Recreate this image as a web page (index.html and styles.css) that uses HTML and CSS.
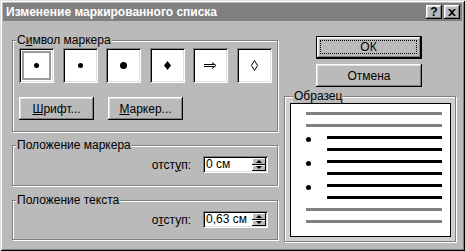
FILE: index.html
```html
<!DOCTYPE html>
<html lang="ru">
  <head>
    <meta charset="UTF-8" />
    <title>Изменение маркированного списка</title>
    <link rel="stylesheet" href="styles.css">
  </head>
  <body>
    <div class="dialog">
      <div class="titlebar">
        <span class="title">Изменение маркированного списка</span>
        <div class="caption-btns">
          <span class="cap-btn">?</span>
          <span class="cap-btn">
            <svg width="8" height="7" viewBox="0 0 8 7">
              <path d="M0 0h2l2 2 2-2h2L5 3.5 8 7H6L4 5 2 7H0l3-3.5z" fill="#000" />
            </svg>
          </span>
        </div>
      </div>

      <div class="main">
        <div class="left">
          <fieldset class="group group-symbol">
            <legend>С<u>и</u>мвол маркера</legend>
            <div class="group-inner">
              <div class="markers">
                <div class="marker selected"><div class="cell"><span class="dot dot-sm"></span></div></div>
                <div class="marker"><div class="cell"><span class="dot dot-sm"></span></div></div>
                <div class="marker"><div class="cell"><span class="dot dot-lg"></span></div></div>
                <div class="marker">
                  <div class="cell">
                    <svg width="7" height="9" viewBox="0 0 7 9"><polygon points="3.5,0 7,4.5 3.5,9 0,4.5" fill="#000" /></svg>
                  </div>
                </div>
                <div class="marker">
                  <div class="cell">
                    <svg width="13" height="7" viewBox="0 0 13 7">
                      <path d="M0 2.5h10M0 4.5h10M8 0.5l4 3-4 3" fill="none" stroke="#000" stroke-width="1" />
                    </svg>
                  </div>
                </div>
                <div class="marker">
                  <div class="cell">
                    <svg width="7" height="11" viewBox="0 0 7 11">
                      <polygon points="3.5,0.5 6.5,5.5 3.5,10.5 0.5,5.5" fill="none" stroke="#000" stroke-width="1" />
                    </svg>
                  </div>
                </div>
              </div>
              <div class="group-buttons">
                <button class="btn btn-small"><u>Ш</u>рифт...</button>
                <button class="btn btn-small"><u>М</u>аркер...</button>
              </div>
            </div>
          </fieldset>

          <fieldset class="group group-pos">
            <legend>Положение маркера</legend>
            <div class="field-row">
              <label>отст<u>у</u>п:</label>
              <div class="spin">
                <span class="spin-value">0 см</span>
                <div class="spin-btns">
                  <span class="spin-btn"><span class="arrow-up"></span></span>
                  <span class="spin-btn"><span class="arrow-down"></span></span>
                </div>
              </div>
            </div>
          </fieldset>

          <fieldset class="group group-text">
            <legend>Положение текста</legend>
            <div class="field-row">
              <label>о<u>т</u>ступ:</label>
              <div class="spin">
                <span class="spin-value">0,63 см</span>
                <div class="spin-btns">
                  <span class="spin-btn"><span class="arrow-up"></span></span>
                  <span class="spin-btn"><span class="arrow-down"></span></span>
                </div>
              </div>
            </div>
          </fieldset>
        </div>

        <div class="right">
          <button class="btn btn-wide btn-default"><span class="focus">ОК</span></button>
          <button class="btn btn-wide btn-cancel">Отмена</button>

          <fieldset class="group group-sample">
            <legend>Образец</legend>
            <div class="sample">
              <div class="line line-gray"></div>
              <div class="line line-gray"></div>
              <div class="bullet-row"><span class="bullet"></span><div class="line line-black"></div></div>
              <div class="line line-black line-indent"></div>
              <div class="bullet-row"><span class="bullet"></span><div class="line line-black"></div></div>
              <div class="line line-black line-indent"></div>
              <div class="bullet-row"><span class="bullet"></span><div class="line line-black"></div></div>
              <div class="line line-black line-indent"></div>
              <div class="line line-gray"></div>
              <div class="line line-gray"></div>
            </div>
          </fieldset>
        </div>
      </div>
    </div>
  </body>
</html>
```

FILE: styles.css
```css
body {
  margin: 0;
  background-color: #bababa;
  font-family: "Liberation Sans", Arial, sans-serif;
  font-size: 12px;
  color: #000;
}

u {
  text-decoration-thickness: 1px;
  text-underline-offset: 1px;
}

.dialog {
  width: 465px;
  height: 251px;
  box-sizing: border-box;
  padding: 3px;
  background-color: #bababa;
  box-shadow: inset 1px 1px #dfdfdf, inset -1px -1px #000,
    inset 2px 2px #fff, inset -2px -2px #808080;
}

/* title bar */
.titlebar {
  height: 18px;
  display: flex;
  align-items: center;
  padding: 0 2px 0 3px;
  background-color: #808080;
  color: #fff;
  font-weight: bold;
  font-size: 12px;
}

.caption-btns {
  margin-left: auto;
  display: flex;
  gap: 2px;
}

.cap-btn {
  width: 16px;
  height: 14px;
  display: flex;
  align-items: center;
  justify-content: center;
  background-color: #bababa;
  color: #000;
  font-size: 12px;
  font-weight: bold;
  box-shadow: inset -1px -1px #000, inset 1px 1px #fff,
    inset -2px -2px #808080, inset 2px 2px #dfdfdf;
}

/* layout */
.main {
  display: flex;
  padding-left: 9px;
}

.left {
  width: 266px;
  padding-top: 13px;
}

.right {
  width: 172px;
  margin-left: 6px;
  display: flex;
  flex-direction: column;
}

/* group boxes */
.group {
  margin: 0;
  padding: 0;
  min-width: 0;
  box-sizing: border-box;
  border: 1px solid #808080;
  box-shadow: inset 1px 1px #fff, 1px 1px #fff;
}

.group legend {
  margin-left: 3px;
  padding: 0 1px;
  line-height: 13px;
  height: 13px;
  background-color: #bababa;
}

.group-symbol {
  height: 98px;
}

.group-inner {
  padding: 1px 5px 0 6px;
}

.markers {
  display: flex;
  justify-content: space-between;
}

.marker {
  width: 35px;
  height: 35px;
  box-sizing: border-box;
  padding: 3px;
  display: flex;
  background-color: #fff;
  box-shadow: inset 1px 1px #808080, inset -1px -1px #fff,
    inset 2px 2px #000, inset -2px -2px #dfdfdf;
}

.cell {
  flex: 1;
  display: flex;
  align-items: center;
  justify-content: center;
  border: 2px solid transparent;
}

.selected .cell {
  border-color: #9a9a9a;
}

.dot {
  background-color: #000;
  border-radius: 50%;
}

.dot-sm {
  width: 5px;
  height: 5px;
}

.dot-lg {
  width: 7px;
  height: 7px;
}

.group-buttons {
  display: flex;
  gap: 14px;
  margin-top: 14px;
}

/* buttons */
.btn {
  font-family: inherit;
  font-size: 12px;
  color: #000;
  height: 23px;
  padding: 0;
  border: none;
  background-color: #bababa;
  box-shadow: inset -1px -1px #000, inset 1px 1px #fff,
    inset -2px -2px #808080, inset 2px 2px #dfdfdf;
}

.btn-small {
  width: 75px;
}

.btn-wide {
  width: 106px;
  margin-left: 32px;
}

.btn-default {
  margin-top: 15px;
  padding: 4px 5px 5px 4px;
  display: flex;
  box-shadow: inset 0 0 0 1px #000, inset -2px -2px #000,
    inset 2px 2px #fff, inset -3px -3px #808080, inset 3px 3px #dfdfdf;
}

.focus {
  flex: 1;
  display: flex;
  align-items: center;
  justify-content: center;
  border: 1px dotted #000;
}

.btn-cancel {
  margin-top: 5px;
}

/* spin fields */
.group-pos {
  margin-top: 7px;
  height: 47px;
}

.group-text {
  margin-top: 8px;
  height: 46px;
}

.field-row {
  display: flex;
  justify-content: flex-end;
  align-items: center;
  padding: 4px 9px 0 0;
}

.field-row label {
  margin-right: 12px;
}

.spin {
  width: 65px;
  height: 17px;
  box-sizing: border-box;
  padding: 2px;
  display: flex;
  background-color: #fff;
  box-shadow: inset 1px 1px #808080, inset -1px -1px #fff,
    inset 2px 2px #000, inset -2px -2px #dfdfdf;
}

.spin-value {
  flex: 1;
  padding-left: 1px;
  line-height: 13px;
}

.spin-btns {
  width: 14px;
  display: flex;
  flex-direction: column;
}

.spin-btn {
  flex: 1;
  display: flex;
  align-items: center;
  justify-content: center;
  background-color: #bababa;
  box-shadow: inset -1px -1px #000, inset 1px 1px #fff;
}

.arrow-up,
.arrow-down {
  width: 0;
  height: 0;
  border-left: 3px solid transparent;
  border-right: 3px solid transparent;
}

.arrow-up {
  border-bottom: 3px solid #000;
}

.arrow-down {
  border-top: 3px solid #000;
}

/* sample preview */
.group-sample {
  margin-top: 3px;
  height: 152px;
  padding: 0 4px 4px 5px;
  background-color: #d0d0d0;
}

.sample {
  height: 134px;
  box-sizing: border-box;
  border: 1px solid #000;
  background-color: #fff;
  padding: 8px 0 0 15px;
  display: flex;
  flex-direction: column;
  gap: 9px;
}

.line {
  height: 3px;
  width: 136px;
}

.line-gray {
  background-color: #808080;
}

.line-black {
  background-color: #000;
  width: 115px;
}

.line-indent {
  margin-left: 21px;
}

.bullet-row {
  display: flex;
  height: 3px;
  align-items: flex-start;
}

.bullet {
  width: 5px;
  height: 5px;
  margin: 0 16px 0 0;
  margin-top: 1px;
  border-radius: 50%;
  background-color: #000;
  flex: none;
}
```
